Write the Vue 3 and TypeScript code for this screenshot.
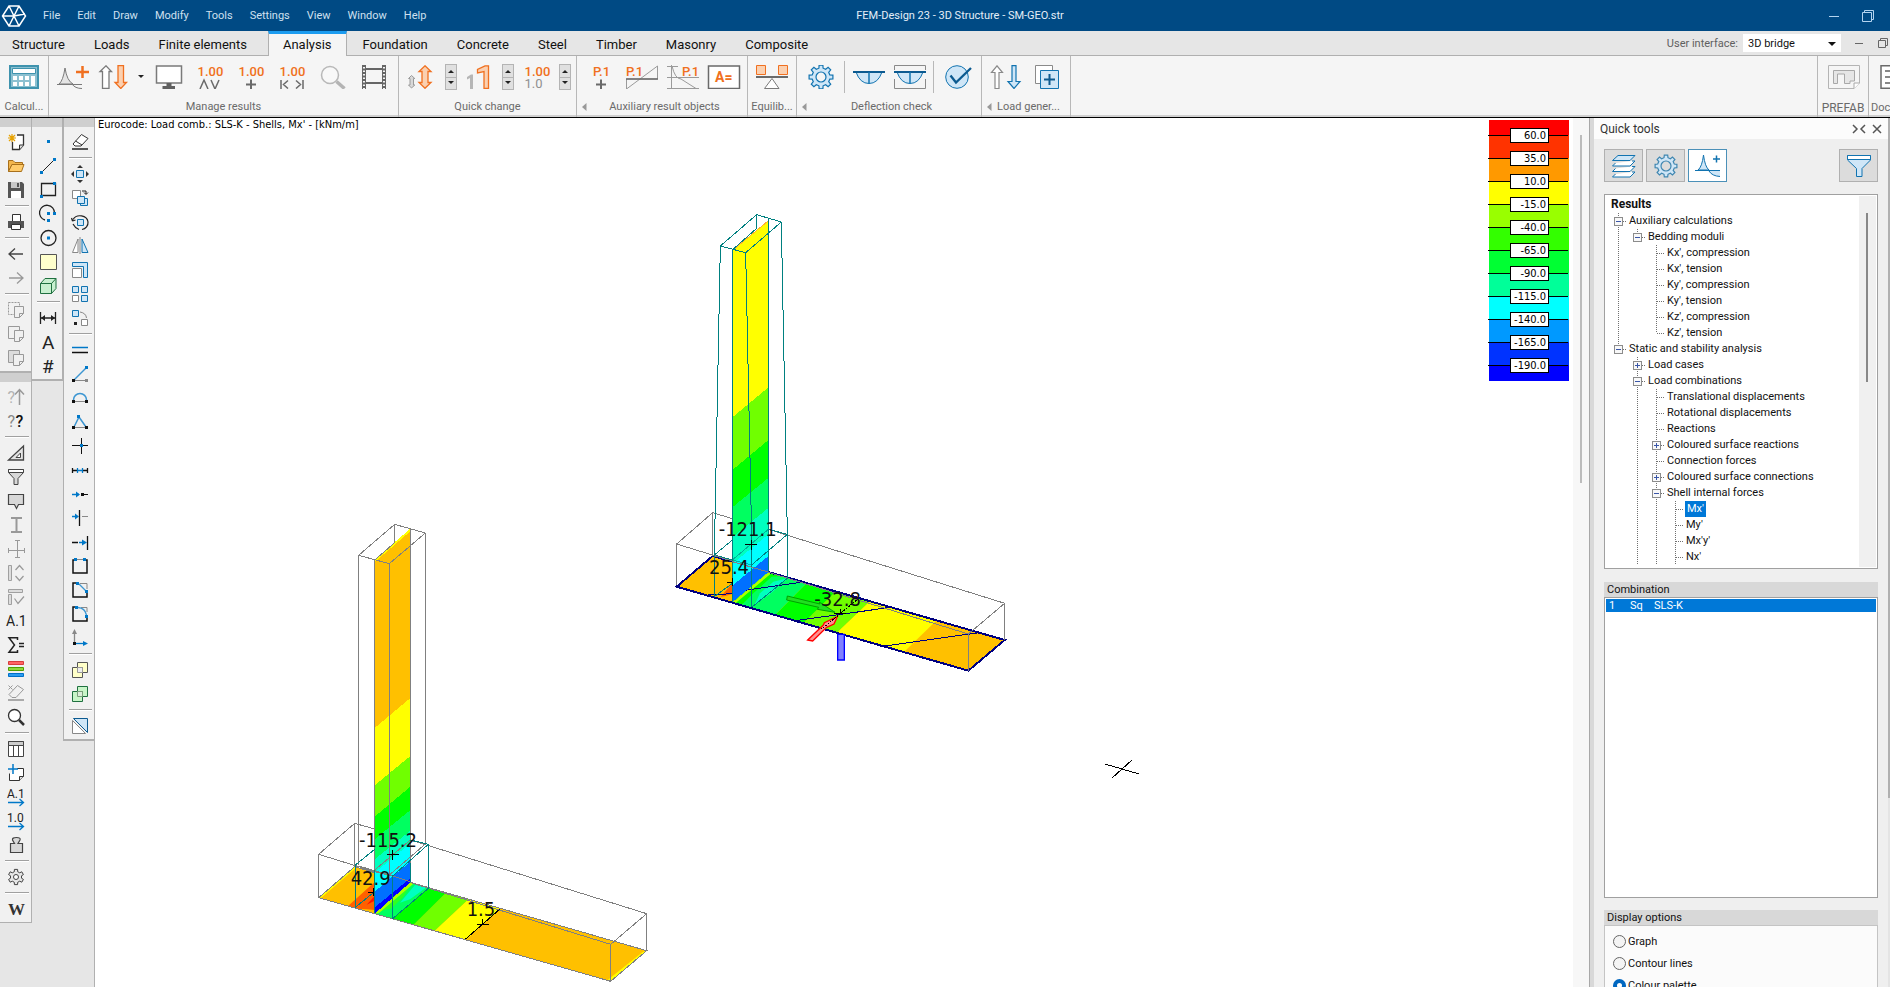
<script setup lang="ts">
import { ref } from 'vue'

const menus = ['File', 'Edit', 'Draw', 'Modify', 'Tools', 'Settings', 'View', 'Window', 'Help']
const tabs = ['Structure', 'Loads', 'Finite elements', 'Analysis', 'Foundation', 'Concrete', 'Steel', 'Timber', 'Masonry', 'Composite']
const activeTab = ref('Analysis')

function gear(cx: number, cy: number, outer: number, inner: number, teeth: number): string {
  const pts: string[] = []
  const step = (Math.PI * 2) / teeth
  for (let i = 0; i < teeth; i++) {
    const a = i * step - Math.PI / 2
    const corners: [number, number][] = [[-0.3, inner], [-0.2, outer], [0.2, outer], [0.3, inner]]
    for (const [k, r] of corners) {
      pts.push((cx + r * Math.cos(a + k * step)).toFixed(1) + ' ' + (cy + r * Math.sin(a + k * step)).toFixed(1))
    }
  }
  return 'M' + pts.join('L') + 'Z'
}

const G = '#7a7a7a'
const O = '#f07020'
const B = '#1173b0'
const LB = '#cfe6f7'

/* Ribbon icons, 36 x 24 */
const big: Record<string, string> = {
  calc: `<path fill="#8cc0d0" stroke="#3f93ae" stroke-width="2" d="M4 1h28v22H4z"/><path fill="#fff" stroke="#3f93ae" d="M6.500 3.500h23v5h-23z"/><path fill="#fff" d="M7 11h4v4H7zM13 11h4v4h-4zM19 11h4v4h-4zM7 17h4v4H7zM13 17h4v4h-4zM19 17h4v4h-4zM25 11h4v10h-4z"/>`,
  diagram: `<path fill="#e4e4e4" stroke="${G}" d="M4 19Q8 16 10 3Q12 16 18 19Z"/><path fill="none" stroke="${G}" d="M2 19.500H27M17 19Q20 23.500 27 23.500"/><path stroke="${O}" stroke-width="2.500" d="M21 7h13M27.500 1v12"/>`,
  arrows: `<path fill="#fff" stroke="${G}" stroke-width="1.300" d="M6.500 23.500V6.500H4L10 .8L15.500 6.500H13V23.500Z"/><path fill="#fbd0b0" stroke="${O}" stroke-width="1.300" d="M22 .7H27.500V17.500H30.500L24.800 23.500L19 17.500H22Z"/>`,
  monitor: `<path fill="#fff" stroke="${G}" stroke-width="1.500" d="M5.500 1h25v17h-25z"/><path fill="#606060" d="M15.500 18h5v3h3.500v3H11.500v-3h4z"/>`,
  peaks: `<text x="5.500" y="10.500" font-size="13" font-weight="500" fill="${O}">1.00</text><path fill="none" stroke="#6a6a6a" stroke-width="1.500" d="M8 24L12 15L16 24M19 15L23 24L27 15"/>`,
  plus: `<text x="5.500" y="10.500" font-size="13" font-weight="500" fill="${O}">1.00</text><path fill="none" stroke="#6a6a6a" stroke-width="2" d="M13 19.500h10M18 14.500v10"/>`,
  ends: `<text x="5.500" y="10.500" font-size="13" font-weight="500" fill="${O}">1.00</text><path fill="none" stroke="#6a6a6a" stroke-width="1.500" d="M7 15v9M14 15.500L9.500 19.500L14 23.500M29 15v9M22 15.500L26.500 19.500L22 23.500"/>`,
  lens: `<circle cx="15" cy="10" r="8.500" fill="#f8f8f8" stroke="#b8b8b8" stroke-width="1.500"/><path stroke="#b4b4b4" stroke-width="3.500" d="M21.500 16.500L29.500 23.500"/>`,
  film: `<path stroke="#666" stroke-width="3" stroke-dasharray="2 1.500" d="M8 0v24M28 0v24"/><path stroke="#666" d="M6.500 0v24M9.500 0v24M26.500 0v24M29.500 0v24"/><path fill="none" stroke="#666" stroke-width="2" d="M9 4h18M9 18h18"/>`,
  scale: `<path fill="#d8d8d8" stroke="#9a9a9a" d="M6.500 23L3.500 20H5V13.500H3.500L6.500 10.500L9.800 13.500H8.500V20H9.800Z"/><path fill="#fbd0b0" stroke="${O}" stroke-width="1.300" d="M20 .8L26 6.500H23V17.500H26L20 23.300L14 17.500H17V6.500H14Z"/>`,
  ones: `<path fill="#b6b6b6" d="M8 24V13L5 14.500V12L9 9.500H11V24Z"/><path fill="#fbd0b0" stroke="${O}" stroke-width="1.300" d="M22 23.500V6.500L15.500 8V4.500L23 .8H26.500V23.500Z"/>`,
  decimals: `<text x="5.500" y="10.500" font-size="13" font-weight="500" fill="${O}">1.00</text><text x="5.500" y="23" font-size="13" fill="#909090">1.0</text>`,
  point: `<text x="10" y="10.500" font-size="13" font-weight="500" fill="${O}">P.1</text><path stroke="#6a6a6a" stroke-width="2" d="M13 19.500h10M18 14.500v10"/>`,
  line: `<path fill="none" stroke="#9a9a9a" d="M2.500 24V14H33.500V1L2.500 24"/><path stroke="#6a6a6a" stroke-width="1.500" d="M2 14h32"/><text x="2" y="10.500" font-size="13" font-weight="500" fill="${O}">P.1</text>`,
  curve: `<path fill="none" stroke="#9a9a9a" d="M2 1.500h11M2 12.500h32M2 23.500h32M6.500 0v24M7 1Q10 14 16 14L31 23.500"/><text x="17" y="10.500" font-size="13" font-weight="500" fill="${O}">P.1</text>`,
  label: `<path fill="#fff" stroke="#6a6a6a" stroke-width="1.500" d="M2.500 1h31v22.500h-31z"/><text x="9" y="17" font-size="14" font-weight="700" fill="${O}">A=</text>`,
  balance: `<path fill="#fbd0b0" stroke="${O}" d="M2.500 .5h9v9h-9zM24.500 .5h9v9h-9z"/><path stroke="#6a6a6a" stroke-width="2" d="M2 12h32"/><path fill="#fff" stroke="${G}" d="M18 13.500L25 23.500H10.500Z"/>`,
  cog: `<path fill="${LB}" stroke="${B}" stroke-width="1.200" d="${gear(18, 12, 12, 9, 8)}"/><circle cx="18" cy="12" r="5" fill="#f5f5f5" stroke="${B}" stroke-width="1.200"/>`,
  sag: `<path fill="${LB}" stroke="${B}" d="M5 7Q9 18.500 18 18.500Q27 18.500 31 7Z"/><path stroke="#0c5a90" stroke-width="2" d="M2 7h32"/><path stroke="${B}" stroke-width="1.500" d="M18 7v11"/>`,
  sagBox: `<path fill="none" stroke="#8a8a8a" d="M2.500 5V.5H33.500V5M2.500 14V23.500H33.500V14"/><path fill="${LB}" stroke="${B}" d="M5 7Q9 18.500 18 18.500Q27 18.500 31 7Z"/><path stroke="#0c5a90" stroke-width="2" d="M2 7h32"/><path stroke="${B}" stroke-width="1.500" d="M18 7v11"/>`,
  check: `<circle cx="17" cy="12" r="11.300" fill="${LB}" stroke="${B}"/><path fill="none" stroke="#0c5a90" stroke-width="2.300" d="M10.500 10.500L16 17.500L31 3"/>`,
  updown: `<path fill="#fff" stroke="#8a8a8a" stroke-width="1.200" d="M7 23.500V7.500H3.500L9 .8L14.500 7.500H11V23.500Z"/><path fill="${LB}" stroke="${B}" stroke-width="1.200" d="M24 .7H28V16.500H32L26 23.500L20 16.500H24Z"/>`,
  add: `<path fill="#fff" stroke="#8a8a8a" d="M6.500 .5h17v18h-17z"/><path fill="${LB}" stroke="${B}" d="M11.500 5.500h18v18h-18z"/><path stroke="#0c5a90" stroke-width="2" d="M15 14.500h11M20.500 9v11"/>`,
  prefab: `<path fill="#f5f5f5" stroke="#b4b4b4" d="M2.500 .5h31V18L28 23.500H2.500z"/><path fill="#e6e6e6" stroke="#a8a8a8" d="M7.500 18.500V5.500H28.500V16H24V18.500H18.500V9H11.500V18.500Z"/><path fill="#fff" stroke="#a8a8a8" d="M33.500 18H28V23.500"/>`,
  doc: `<path fill="#fff" stroke="#6a6a6a" stroke-width="1.500" d="M9 .8h24v22.500H9z"/><path stroke="#888" stroke-width="2" d="M13 6h18M13 12h18M13 18h18"/>`,
  layers: `<path fill="${LB}" stroke="${B}" d="M12 1.500H29L24 6.500H6.500Z"/><path fill="#fff" stroke="${B}" d="M9.500 9L6.500 12H24L29 7H26M9.500 14.500L6.500 17.500H24L29 12.500H26M9.500 20L6.500 23H24L29 18H26"/>`,
  cogSmall: `<path fill="${LB}" stroke="#3f86b0" stroke-width="1.200" d="${gear(18, 12, 11, 8.5, 8)}"/><circle cx="18" cy="12" r="5" fill="#dcdcdc" stroke="#3f86b0" stroke-width="1.200"/>`,
  diagramBlue: `<path fill="${LB}" stroke="${B}" d="M8 16Q12 13 13.500 1Q15 13 19 16Z"/><path fill="${LB}" d="M19 17Q22 22 30 22.500V17"/><path fill="none" stroke="${B}" d="M5 16.500H30M19 17Q22 22 30 22.500"/><path stroke="${B}" stroke-width="1.500" d="M23 5h7M26.500 1.500v7"/>`,
  funnel: `<path fill="${LB}" stroke="${B}" d="M6.500 1.500H29.500V6L21 14.500V22.500H15.500V14.500L6.500 6Z"/><path fill="#fff" stroke="${B}" d="M6.500 1.500H29.500V5.500H6.500Z"/>`
}

interface Tool { icon: string; title: string; spin?: boolean; drop?: boolean; sep?: boolean }
interface Group { label: string; cls: string; more?: boolean; tools: Tool[] }
const groups: Group[] = [
  { label: 'Calcul...', cls: 'narrow', tools: [{ icon: 'calc', title: 'Calculations' }] },
  {
    label: 'Manage results', cls: 'manage', tools: [
      { icon: 'diagram', title: 'New result' }, { icon: 'arrows', title: 'Reaction display', drop: true },
      { icon: 'monitor', title: 'Screen' }, { icon: 'peaks', title: 'Local extremes' }, { icon: 'plus', title: 'Numeric value' },
      { icon: 'ends', title: 'Maximum values' }, { icon: 'lens', title: 'Find' }, { icon: 'film', title: 'Animation' }]
  },
  {
    label: 'Quick change', cls: 'quick', tools: [
      { icon: 'scale', title: 'Diagram scale', spin: true }, { icon: 'ones', title: 'Text size', spin: true }, { icon: 'decimals', title: 'Decimals', spin: true }]
  },
  {
    label: 'Auxiliary result objects', cls: 'aux', more: true, tools: [
      { icon: 'point', title: 'Result point' }, { icon: 'line', title: 'Section line' }, { icon: 'curve', title: 'Resultants' }, { icon: 'label', title: 'Label' }]
  },
  { label: 'Equilib...', cls: 'narrow', tools: [{ icon: 'balance', title: 'Equilibrium' }] },
  {
    label: 'Deflection check', cls: 'defl', more: true, tools: [
      { icon: 'cog', title: 'Configuration', sep: true }, { icon: 'sag', title: 'Deflection length' },
      { icon: 'sagBox', title: 'Deflection region', sep: true }, { icon: 'check', title: 'Check' }]
  },
  { label: 'Load gener...', cls: 'gener', more: true, tools: [{ icon: 'updown', title: 'Reactions to loads' }, { icon: 'add', title: 'Add loads' }] }
]

/* Side toolbar icons, 24 x 24. An empty name stands for a separator. */
const K = '#333'
const sm: Record<string, string> = {
  new: `<path fill="#fff" stroke="${K}" stroke-width="1.300" d="M13 5H19.500V15L15.500 19.500H8.500V12"/><path fill="#ddd" stroke="${K}" d="M19.500 15H15.500V19.500"/><path stroke="#e8a200" stroke-width="1.200" d="M8 4v8M4 8h8M5 5l6 6M11 5l-6 6"/>`,
  open: `<path fill="#f3b64c" stroke="#a8701c" d="M4.500 17.500V6.500H9L11 8.500H18.500V10.500H8Z"/><path fill="#ffcb6a" stroke="#a8701c" d="M4.500 17.500L8 10.500H20L17.500 17.500Z"/>`,
  save: `<path fill="#555" d="M4 4H18L20 6V20H4z"/><path fill="#c9c9c9" d="M7 4h9v6H7z"/><path fill="#fff" d="M7 13h10v7H7z"/><path fill="#555" d="M13 5h2v4h-2z"/>`,
  print: `<path fill="#fff" stroke="${K}" d="M8.500 4.500h8v7h-8z"/><path fill="#555" d="M4 11h16v7H4z"/><path fill="#fff" stroke="${K}" d="M7.500 14.500h9v5h-9z"/>`,
  back: `<path fill="none" stroke="#444" stroke-width="1.300" d="M19 12H5M11 6.500L5 12L11 17.500"/>`,
  fwd: `<path fill="none" stroke="#999" stroke-width="1.300" d="M5 12H19M13 6.500L19 12L13 17.500"/>`,
  cut: `<path fill="none" stroke="#999" stroke-dasharray="2 1" d="M4.500 4.500h11v12h-11z"/><path fill="#f0f0f0" stroke="#999" d="M10.500 8.500H19.500V15.500L15.500 19.500H10.500Z"/><path fill="none" stroke="#999" d="M19.500 15.500h-4v4"/>`,
  copy: `<path fill="#f0f0f0" stroke="#999" d="M4.500 4.500h11v12h-11z"/><path fill="#f0f0f0" stroke="#999" d="M10.500 8.500H19.500V15.500L15.500 19.500H10.500Z"/><path fill="none" stroke="#999" d="M19.500 15.500h-4v4"/>`,
  paste: `<path fill="#dcdcdc" stroke="#999" d="M4.500 4.500h11v12h-11z"/><path fill="#f0f0f0" stroke="#999" d="M9.500 8.500H19.500V15.500L15.500 19.500H9.500Z"/><path fill="none" stroke="#999" d="M19.500 15.500h-4v4"/>`,
  queryUp: `<text x="3.500" y="18" font-size="16" fill="#b4b4b4">?</text><path fill="none" stroke="#999" stroke-width="1.500" d="M15.500 20V5M11 9.500L15.500 4.500L20 9.500"/>`,
  query: `<text x="3.500" y="18" font-size="16" fill="#888">?</text><text x="11.500" y="18" font-size="16" font-weight="500" fill="#111">?</text>`,
  tri: `<path fill="#e4e4e4" stroke="#444" stroke-width="1.300" d="M4.500 19H19.500V5Z"/><path fill="#fff" stroke="#444" d="M12 16.500H16.500V12Z"/>`,
  filter: `<path fill="#d8d8d8" stroke="#444" d="M4.500 7.500V4.500H19.500V7.500L14 13.500V19.500H10V13.500Z"/><path fill="#fff" stroke="#444" d="M4.500 4.500H19.500V7.500H4.500Z"/>`,
  comment: `<path fill="#d8d8d8" stroke="#444" stroke-width="1.200" d="M4.500 5.500H19.500V15.500H14.500L12.500 19.500L10.500 15.500H4.500Z"/>`,
  beam: `<path fill="none" stroke="#999" stroke-width="2" d="M7 5h11M7 19h11M12.500 5v14"/>`,
  axis: `<path fill="none" stroke="#999" d="M13.500 3v18M4 13.500h17M11 3.500h5M4.500 11v5M20.500 11v5M11 20.500h5"/>`,
  heightBar: `<path fill="#ddd" stroke="#a0a0a0" d="M4.500 4.500h3v15h-3z"/><path fill="none" stroke="#999" stroke-width="1.200" d="M11.500 9L15.500 4.500L19.500 9M11.500 15L15.500 19.500L19.500 15"/>`,
  checkBar: `<path fill="#ddd" stroke="#a0a0a0" d="M4.500 9.500h3v10h-3zM4.500 4.500h14v3h-14z"/><path fill="none" stroke="#999" stroke-width="1.200" d="M10.500 13.500L14 18.500L20 11.500"/>`,
  a1: `<text x="2" y="17" font-size="14" fill="#222">A.1</text>`,
  sigma: `<path fill="none" stroke="#222" stroke-width="1.500" d="M13.500 7V4.800H5L10.500 12L5 19.200H13.500V17"/><path stroke="#222" stroke-width="1.500" d="M15 10.500h5M15 13.500h5"/>`,
  rgb: `<path fill="#ff6464" stroke="#d83c3c" d="M4.500 4.500h15v3h-15z"/><path fill="#90d83c" stroke="#4da000" d="M4.500 10.500h15v3h-15z"/><path fill="#2b9cf0" stroke="#0070c8" d="M4.500 16.500h15v3h-15z"/>`,
  eraseX: `<path fill="none" stroke="#999" d="M4.500 4.500l4 4M8.500 4.500l-4 4M5 13.500L13.500 4.500L19.500 8.500L12 16.500H8Z"/><path stroke="#aaa" stroke-width="2" d="M4 19h16"/>`,
  find: `<circle cx="10.500" cy="10.500" r="6" fill="#fff" stroke="#333" stroke-width="1.300"/><path stroke="#333" stroke-width="2.500" d="M15 15L20 20"/>`,
  table: `<path fill="#fff" stroke="#444" d="M4.500 4.500h15v15h-15z"/><path fill="#ccc" stroke="#444" d="M4.500 4.500h15v4h-15z"/><path stroke="#444" d="M9.500 9v11M14.500 9v11"/>`,
  addPage: `<path fill="#fff" stroke="${K}" d="M13 7.500H19.500V15.500L15.500 19.500H5.500V12.500"/><path fill="#ddd" stroke="${K}" d="M19.500 15.500h-4v4"/><path stroke="#0078c8" stroke-width="1.500" d="M4 8h10M9 3v10"/>`,
  a1Arrow: `<text x="3" y="13" font-size="12" fill="#222">A.1</text><path fill="none" stroke="#0078c8" stroke-width="1.300" d="M4 17.500H19M15.500 14L19.500 17.500L15.500 21"/>`,
  oneArrow: `<text x="3" y="13" font-size="12" fill="#222">1.0</text><path fill="none" stroke="#0078c8" stroke-width="1.300" d="M4 17.500H19M15.500 14L19.500 17.500L15.500 21"/>`,
  weight: `<path fill="#d8d8d8" stroke="#444" stroke-width="1.200" d="M6.500 19.500V10.500H10.500L8.500 7Q8 4.500 12.500 4.500Q17 4.500 16 7L14 10.500H18.500V19.500Z"/>`,
  gear: `<path fill="#e6e6e6" stroke="#444" d="${gear(12, 12, 7.8, 5.6, 6)}"/><circle cx="12" cy="12" r="2.500" fill="#fff" stroke="#444"/>`,
  word: `<text x="4" y="18" font-size="17" font-weight="700" class="serif" fill="#333">W</text>`,
  dot: `<path fill="#0078c8" d="M11 10h3v3h-3z"/>`,
  seg: `<path stroke="#222" d="M6 18L18 6"/><path fill="#0078c8" d="M4 17h3v3H4zM17 4h3v3h-3z"/>`,
  rect: `<path fill="none" stroke="#222" stroke-width="1.300" d="M5.500 5.500h14v12h-14z"/><path fill="#0078c8" d="M4 17h3v3H4zM17 4h3v3h-3z"/>`,
  arc: `<path fill="none" stroke="#222" stroke-width="1.300" d="M9 18A7.500 7.500 0 1 1 18.500 11"/><path fill="#0078c8" d="M11 10h3v3h-3zM17 10h3v3h-3zM11 17h3v3h-3z"/>`,
  circle: `<circle cx="12.500" cy="12" r="7.500" fill="none" stroke="#222" stroke-width="1.300"/><path fill="#0078c8" d="M11 10.500h3v3h-3z"/>`,
  plate: `<path fill="#ffffcc" stroke="#555" d="M4.500 4.500h16v15h-16z"/>`,
  cube: `<path fill="#c8f0d0" stroke="#1f7040" d="M4.500 9.500h11v10h-11zM4.500 9.500L9 4.500H20V14.500L15.500 19.500V9.500ZM15.500 9.500L20 4.500"/>`,
  dim: `<path stroke="#222" stroke-width="1.300" d="M4.500 6v12M19.500 6v12M5 12h14"/><path fill="#222" d="M5 12l4-3v6zM19 12l-4-3v6z"/>`,
  bigA: `<text x="6" y="19" font-size="19" fill="#222">A</text>`,
  hash: `<text x="6" y="19" font-size="19" fill="#222">#</text>`,
  erase: `<path fill="#fff" stroke="${K}" d="M5 14L13.500 4.500L20 8.500L13 16H7Z"/><path fill="none" stroke="${K}" d="M7.500 11L14 15"/><path stroke="#555" stroke-width="2" d="M4 19h16"/>`,
  move: `<path fill="${LB}" stroke="${B}" d="M8.500 8.500h7v7h-7z"/><path fill="#333" d="M12 3l3 3H9zM12 21l3-3H9zM3 12l3-3v6zM21 12l-3-3v6z"/>`,
  copies: `<path fill="#fff" stroke="#888" d="M4.500 4.500h8v8h-8z"/><path fill="${LB}" stroke="${B}" d="M12.500 12.500h7v7h-7z"/><path fill="${LB}" stroke="${B}" d="M9.500 10.500h7v7h-7z"/><path fill="none" stroke="#222" d="M14 5h4v3M16 6.500l2 2l2-2"/>`,
  rotate: `<path fill="${LB}" stroke="${B}" d="M9.500 9.500h6v6h-6z"/><path fill="none" stroke="#222" stroke-width="1.200" d="M5 9.500A8 7 0 0 1 20 12A7.500 7 0 0 1 14 19.500M4.500 11l-1 -3M4.500 11l3 -1M5 14Q7 18 11 19.500"/>`,
  mirror: `<path fill="#fff" stroke="#888" d="M4.500 18.500H10V5Z"/><path fill="${LB}" stroke="${B}" d="M14 18.500H20L14 5Z"/><path stroke="#888" d="M12 3v17"/>`,
  resize: `<path fill="${LB}" stroke="${B}" d="M4.500 4.500h15v15h-4v-11h-11z"/><path fill="#fff" stroke="#888" d="M4.500 10.500h9v9h-9z"/>`,
  array: `<path fill="${LB}" stroke="${B}" d="M4.500 4.500h6v6h-6zM13.500 4.500h6v6h-6zM13.500 13.500h6v6h-6z"/><path fill="#fff" stroke="#888" d="M4.500 13.500h6v6h-6z"/>`,
  along: `<path fill="${LB}" stroke="${B}" d="M4.500 4.500h6v6h-6z"/><path fill="#fff" stroke="#888" d="M13.500 13.500h6v6h-6z"/><path fill="none" stroke="#888" d="M12 6Q18 7 18.500 12"/><path fill="#222" d="M6 16h3v3H6z"/>`,
  parallel: `<path stroke="#0078c8" stroke-width="1.500" d="M4 9.500h16"/><path stroke="#111" stroke-width="1.500" d="M4 14.500h16"/>`,
  edit1: `<path stroke="#3c96d2" stroke-width="1.500" d="M6 18L18 6"/><path stroke="#888" d="M7 18.500h10"/><path fill="#111" d="M4 17h3v3H4z"/><path fill="#0078c8" d="M17 4h3v3h-3z"/><path fill="#888" d="M17 17h3v3h-3z"/>`,
  edit2: `<path fill="none" stroke="#3c96d2" stroke-width="1.500" d="M5.500 14A6.500 6.500 0 0 1 18.500 14"/><path stroke="#888" d="M7 15.500h10"/><path fill="#111" d="M4 14h3v3H4zM17 14h3v3h-3z"/>`,
  edit3: `<path fill="none" stroke="#3c96d2" stroke-width="1.500" d="M6 17L11 7L18 17"/><path stroke="#888" d="M7 17.500h10"/><path fill="#111" d="M4 16h3v3H4zM17 16h3v3h-3z"/><path fill="#0078c8" d="M9 5h3v3H9z"/>`,
  cross: `<path stroke="#111" d="M4 11.500h16M13.500 4v16"/><path fill="#0078c8" d="M12 10h3v3h-3z"/>`,
  divide: `<path stroke="#111" stroke-width="1.300" d="M4 12.500h5M14 12.500h6M4.500 10v5M19.500 10v5"/><path stroke="#0078c8" stroke-width="1.300" d="M9 12.500h6M9.500 10v5M14.500 10v5"/>`,
  join: `<path stroke="#0078c8" stroke-width="1.500" d="M4 12.500h7"/><path fill="#0078c8" d="M8 9.500l4 3l-4 3z"/><path fill="#111" d="M13 11h3v3h-3z"/><path stroke="#111" d="M16 12.500h4"/>`,
  trim: `<path stroke="#0078c8" stroke-width="1.500" d="M4 10.500h5"/><path fill="#0078c8" d="M7 7.500l4 3l-4 3z"/><path stroke="#111" stroke-width="1.300" d="M11.500 4v16"/><path stroke="#888" d="M14 10.500h6"/>`,
  extend: `<path stroke="#111" stroke-width="1.300" d="M4 12.500h6M19.500 6v14"/><path stroke="#0078c8" stroke-width="1.500" d="M11 12.500h5"/><path fill="#0078c8" d="M14 9.500l5 3l-5 3z"/>`,
  gap: `<path fill="none" stroke="#111" stroke-width="1.500" d="M7 6H5V19H19V6H17"/><path stroke="#888" d="M9 5.500h6"/><path fill="#0078c8" d="M6 4h3v3H6zM15 4h3v3h-3z"/>`,
  chamfer: `<path fill="none" stroke="#111" stroke-width="1.500" d="M8 5H5V19H19V15"/><path fill="none" stroke="#888" d="M12 5.500h7V11"/><path stroke="#3c96d2" stroke-width="1.300" d="M10 5L18 13"/><path fill="#0078c8" d="M8 4h3v3H8zM17 12h3v3h-3z"/>`,
  fillet: `<path fill="none" stroke="#111" stroke-width="1.500" d="M8 5H5V19H19V15"/><path fill="none" stroke="#888" d="M13 5.500h6V10"/><path fill="none" stroke="#3c96d2" stroke-width="1.300" d="M10 5.500Q17 6 18.500 13"/><path fill="#0078c8" d="M7 4h3v3H7zM17 13h3v3h-3z"/>`,
  ucs: `<path stroke="#888" stroke-width="1.300" d="M6.500 17V6"/><path fill="#888" d="M6.500 3l2.500 5H4z"/><path stroke="#0078c8" stroke-width="1.300" d="M8 17.500h9"/><path fill="#0078c8" d="M20 17.500l-5-2.500v5z"/><path fill="#111" d="M5 16h3v3H5z"/>`,
  union: `<path fill="#ffffc8" stroke="#555" d="M9.500 4.500h10v10h-10z"/><path fill="#ffffc8" stroke="#555" d="M4.500 9.500h10v10h-10z"/><path fill="#eee" stroke="#999" d="M9.500 9.500h5v5h-5z"/>`,
  unionG: `<path fill="#c8f5c8" stroke="#1f7040" d="M9.500 4.500h10v10h-10z"/><path fill="#c8f5c8" stroke="#1f7040" d="M4.500 9.500h10v10h-10z"/><path fill="#ddeedd" stroke="#7aa07a" d="M9.500 9.500h5v5h-5z"/>`,
  split: `<path fill="${LB}" stroke="#0c5a90" d="M5.500 4.500H19.500V18.500Z"/><path fill="#fff" stroke="#888" d="M4.500 6.500V19.500H17.500Z"/>`
}
const barA = ['new', 'open', 'save', '', 'print', '', 'back', 'fwd', '', 'cut', 'copy', 'paste']
const barB = ['queryUp', 'query', '', 'tri', 'filter', 'comment', 'beam', 'axis', 'heightBar', 'checkBar', 'a1', 'sigma', 'rgb', 'eraseX', 'find', '', 'table', 'addPage', 'a1Arrow', 'oneArrow', 'weight', '', 'gear', '', 'word']
const barC = ['dot', 'seg', 'rect', 'arc', 'circle', 'plate', 'cube', '', 'dim', 'bigA', 'hash']
const barD = ['erase', '', 'move', 'copies', 'rotate', 'mirror', 'resize', 'array', 'along', '', 'parallel', 'edit1', 'edit2', 'edit3', 'cross', 'divide', 'join', 'trim', 'extend', 'gap', 'chamfer', 'fillet', 'ucs', '', 'union', 'unionG', '', 'split']
const sideColumns = [[barA, barB], [barC], [barD]]

/* Guide codes: | line, T tee, L corner, m/p open/closed with siblings below, n open and last */
const tree: { g: string; t: string; sel?: boolean }[] = [
  { g: 'm', t: 'Auxiliary calculations' },
  { g: '|n', t: 'Bedding moduli' },
  { g: '| T', t: "Kx', compression" },
  { g: '| T', t: "Kx', tension" },
  { g: '| T', t: "Ky', compression" },
  { g: '| T', t: "Ky', tension" },
  { g: '| T', t: "Kz', compression" },
  { g: '| L', t: "Kz', tension" },
  { g: 'n', t: 'Static and stability analysis' },
  { g: ' p', t: 'Load cases' },
  { g: ' m', t: 'Load combinations' },
  { g: ' |T', t: 'Translational displacements' },
  { g: ' |T', t: 'Rotational displacements' },
  { g: ' |T', t: 'Reactions' },
  { g: ' |p', t: 'Coloured surface reactions' },
  { g: ' |T', t: 'Connection forces' },
  { g: ' |p', t: 'Coloured surface connections' },
  { g: ' |m', t: 'Shell internal forces' },
  { g: ' ||T', t: "Mx'", sel: true },
  { g: ' ||T', t: "My'" },
  { g: ' ||T', t: "Mx'y'" },
  { g: ' ||T', t: "Nx'" }
]

const bands = ['#ff0000', '#ff3300', '#ff9900', '#ffff00', '#99ff00', '#33ff00', '#00ff33', '#00ff99', '#00ffff', '#0099ff', '#0033ff', '#0000ff']
const levels = ['60.0', '35.0', '10.0', '-15.0', '-40.0', '-65.0', '-90.0', '-115.0', '-140.0', '-165.0', '-190.0']

/* Colour bands of a wall strip: fill, lower edge at the left side, lower edge at the right side */
type Band = [string, number, number]
function strip(x1: number, x2: number, top: [number, number], list: Band[]) {
  let [l, r] = top
  return list.map(([fill, nl, nr]) => {
    const points = `${x1},${l} ${x2},${r} ${x2},${nr} ${x1},${nl}`
    l = nl
    r = nr
    return { fill, points }
  })
}
const wallA = strip(217, 325, [150, 60], [['#ffff00', 652, 562], ['#70ff00', 810, 720], ['#00ff00', 922, 834], ['#00ff60', 1012, 924], ['#00ffc0', 1092, 1003], ['#00ffff', 1157, 1068], ['#0070ff', 1207, 1116]])
const wallB = strip(224, 331, [150, 58], [['#ffc000', 654, 564], ['#ffff00', 826, 738], ['#70ff00', 920, 830], ['#00ff00', 988, 900], ['#00ff60', 1048, 962], ['#00ffc0', 1088, 1000], ['#00ffff', 1145, 1055], ['#0070ff', 1192, 1105], ['#0000ff', 1211, 1117]])

const display = ref('Colour palette')
const displayOptions = ['Graph', 'Contour lines', 'Colour palette']
</script>

<template>
  <div class="app">
    <header class="title-bar">
      <svg class="logo" width="26" height="24" viewBox="0 0 26 24"><path fill="none" stroke="#fff" stroke-width="1.500" d="M8 2H18L24.500 12L18 22H8L1.500 12ZM8 2L18 22M18 2L8 22M1.500 12L13 12L24 10" /></svg>
      <nav class="menus"><button v-for="m in menus" :key="m" type="button">{{ m }}</button></nav>
      <h1>FEM-Design 23 - 3D Structure - SM-GEO.str</h1>
      <div class="win">
        <button type="button" aria-label="Minimize"><svg width="12" height="12"><path stroke="#b4d4f0" d="M1 6.500h10" /></svg></button>
        <button type="button" aria-label="Restore"><svg width="12" height="12"><path fill="none" stroke="#b4d4f0" d="M.5 2.500h9v9h-9zM2.500 2V.500h9v9H10" /></svg></button>
      </div>
    </header>

    <div class="tab-row">
      <button v-for="t in tabs" :key="t" type="button" class="tab" :class="{ on: t === activeTab }" @click="activeTab = t">{{ t }}</button>
      <span class="grow"></span>
      <label for="ui">User interface:</label>
      <div class="select-box">
        <select id="ui"><option>3D bridge</option></select>
        <svg width="8" height="5"><path fill="#111" d="M0 0h8l-4 4z" /></svg>
      </div>
      <button type="button" class="mini" aria-label="Minimize view"><svg width="10" height="10"><path stroke="#666" d="M1 5.500h8" /></svg></button>
      <button type="button" class="mini last" aria-label="Restore view"><svg width="10" height="10"><path fill="none" stroke="#666" d="M.5 2.500h7v7h-7zM2.500 2V.500h7v7H8" /></svg></button>
    </div>

    <div class="ribbon">
      <section v-for="g in groups" :key="g.label" class="group" :class="g.cls">
        <div class="tools">
          <template v-for="t in g.tools" :key="t.icon">
            <button type="button" class="tool" :title="t.title"><svg width="36" height="24" v-html="big[t.icon]"></svg></button>
            <button v-if="t.drop" type="button" class="drop" aria-label="More"><svg width="6" height="4"><path fill="#222" d="M0 0h6l-3 3z" /></svg></button>
            <div v-if="t.spin" class="spin">
              <button type="button" aria-label="Increase"><svg width="6" height="4"><path fill="#222" d="M0 4h6l-3-3z" /></svg></button>
              <button type="button" aria-label="Decrease"><svg width="6" height="4"><path fill="#222" d="M0 0h6l-3 3z" /></svg></button>
            </div>
            <i v-if="t.sep" class="vsep"></i>
          </template>
        </div>
        <div class="caption"><svg v-if="g.more" width="5" height="8"><path fill="#999" d="M4.500 0v8L0 4z" /></svg><span>{{ g.label }}</span></div>
      </section>
      <span class="grow"></span>
      <section class="group prefab">
        <div class="tools"><button type="button" class="tool" title="Prefab"><svg width="36" height="24" v-html="big.prefab"></svg></button></div>
        <div class="caption"><span>PREFAB</span></div>
      </section>
      <section class="group docs">
        <div class="tools"><button type="button" class="tool" title="Documentation"><svg width="36" height="24" v-html="big.doc"></svg></button></div>
        <div class="caption"><span>Doc</span></div>
      </section>
    </div>

    <div class="work">
      <aside class="side">
        <div v-for="(col, c) in sideColumns" :key="c" class="col">
          <div v-for="(bar, b) in col" :key="b" class="bar" role="toolbar">
            <div class="grip"></div>
            <template v-for="(n, i) in bar" :key="i">
              <button v-if="n" type="button" :aria-label="n"><svg width="24" height="24" v-html="sm[n]"></svg></button>
              <hr v-else />
            </template>
          </div>
        </div>
      </aside>

      <main class="canvas">
        <p class="status">Eurocode: Load comb.: SLS-K - Shells, Mx' - [kNm/m]</p>
        <svg class="scene" width="100%" height="100%">
          <g transform="translate(-95 -118)">
            <svg x="660" y="200" width="360" height="480" viewBox="0 0 1080 1440">
              <g class="ln gray">
                <path d="M50 1032L158 938L217 956M158 938V1068M50 1032V1160" />
              </g>
              <path fill="#ffc000" d="M50 1160L158 1068L325 1116L1034 1320L925 1412Z" />
              <path fill="#ffff00" d="M530 1298L630 1203L830 1261L732 1356Z" />
              <path fill="#70ff00" d="M430 1269L528 1174L630 1203L530 1298Z" />
              <path fill="#00ff00" d="M345 1245L440 1149L528 1174L430 1269Z" />
              <path fill="#00ff60" d="M217 1208L325 1116L440 1149L345 1245Z" />
              <path fill="#00ff00" d="M217 1208L325 1116L368 1128L335 1130L280 1180L245 1215Z" />
              <path fill="#b0ff00" d="M217 1208L325 1116L335 1119L228 1208Z" />
              <path fill="#00ffc0" d="M283 1216L300 1180L340 1145L385 1134L330 1182Z" />
              <path fill="#ff6000" d="M182 1190L217 1150V1182L195 1188Z" />
              <g class="ln navy"><path d="M145 1185L215 1181L262 1170L430 1146M405 1262L600 1235L690 1222M660 1340L870 1310L960 1298" /></g>
              <g class="ln navy thick"><path d="M325 1116L1034 1320L925 1412L50 1160L158 1068L217 1085" /></g>
              <g class="ln teal"><path d="M163 1065L217 1020M163 1065L217 1080" /></g>
              <g class="ln gray"><path d="M325 988L1034 1210V1320M50 1032L925 1302L1034 1210M925 1302V1412" /></g>
              <polygon v-for="(p, i) in wallA" :key="i" class="crisp" :fill="p.fill" :points="p.points" />
              <path class="ln" stroke="#ffb030" stroke-width="1" d="M217 152L325 62" />
              <g class="ln teal">
                <path d="M181 138L290 44L364 66L257 158ZM290 44V85L217 150V1207M325 56V1116M181 138L163 1062V1190M364 66L382 1000V1135L275 1222M257 158L274 960L275 1222M325 988L382 1003L275 1095M163 1190L217 1150" />
                <path class="faint" d="M217 1080L325 988M217 1080L275 1095" />
              </g>
              <path class="ln gray" d="M217 1085L325 1116" />
              <path fill="#20e020" stroke="#00a000" stroke-width="3" d="M382 1188L480 1212L478 1206L525 1237L472 1228L476 1222L380 1200Z" />
              <path fill="#ff9090" stroke="#ff0000" stroke-width="4" d="M443 1320L490 1275L493 1268L532 1250L522 1272L500 1282L458 1323Z" />
              <path fill="#8080ff" stroke="#0000ff" stroke-width="4" d="M533 1303H553V1380H533Z" />
              <g class="ln black">
                <path stroke-dasharray="2 1" d="M590 1200L485 1287" />
                <path d="M255 1034H291M273 1019V1050M202 1147H217M217 1135V1158M523 1241H559M541 1226V1241" />
              </g>
              <text x="176" y="1008">-121.1</text>
              <text x="147" y="1123">25.4</text>
              <text x="463" y="1218">-32.8</text>
            </svg>

            <svg x="300" y="510" width="360" height="477" viewBox="0 0 1080 1431">
              <g class="ln gray">
                <path d="M56 1033L164 940L224 957M164 940V1070M56 1033V1163M176 136V1065" />
              </g>
              <path fill="#ffc000" d="M56 1163L164 1070L331 1117L1040 1322L932 1414Z" />
              <path fill="#ffff00" d="M56 1163L164 1070L170 1072L64 1163ZM1028 1326L1040 1322L932 1414L920 1412Z" />
              <path fill="#ffff00" d="M403 1263L505 1168L600 1195L497 1290Z" />
              <path fill="#70ff00" d="M340 1245L438 1148L505 1168L403 1263Z" />
              <path fill="#00ff00" d="M278 1227L385 1133L438 1148L340 1245Z" />
              <path fill="#00ff60" d="M224 1211L331 1117L385 1133L278 1227Z" />
              <path fill="#00ffc0" d="M300 1178L345 1125L380 1132L330 1168Z" />
              <path fill="#30ff20" d="M235 1205L285 1170L325 1135L310 1160L275 1195Z" />
              <path fill="#b0ff00" d="M224 1211L331 1117L342 1120L236 1210Z" />
              <path fill="#ff6000" d="M145 1187L224 1116V1200L200 1198L170 1196Z" />
              <path fill="#ff1000" d="M200 1184L224 1158V1172Z" />
              <g class="ln gray"><path d="M331 1117L1040 1322L932 1414L56 1163L164 1070L224 1088M331 990L1040 1211V1322M56 1033L932 1303L1040 1211M932 1303V1414" /></g>
              <polygon v-for="(p, i) in wallB" :key="i" class="crisp" :fill="p.fill" :points="p.points" />
              <path class="ln" stroke="#ffff00" stroke-width="2" d="M224 152L331 60" />
              <g class="ln gray">
                <path d="M176 136L284 43L376 69L268 161ZM284 43V98L224 150V1080M331 56V1060M376 69V1002M268 161V1095M331 990L376 1002L268 1095L176 1068M224 1080L331 990M224 1085L278 1098L331 1115" />
              </g>
              <g class="ln teal"><path d="M224 1080V1210M331 1060V1117M166 1065L224 1018M166 1065V1192L224 1145M278 1098V1226L385 1135V1003L278 1098M331 990L385 1003" /></g>
              <g class="ln black">
                <path d="M600 1197L497 1287" />
                <path d="M260 1034H296M278 1019V1050M204 1147H222M219 1135V1158M530 1242H566M548 1226V1246" />
              </g>
              <text x="177" y="1011">-115.2</text>
              <text x="152" y="1125">42.9</text>
              <text x="500" y="1218">1.5</text>
            </svg>
            <path class="ln black" d="M1105 764L1139 774M1132 760L1112 778" />
          </g>
        </svg>

        <svg class="legend" width="81" height="261">
          <rect v-for="(c, i) in bands" :key="c" x="1" width="80" :y="i ? 23 * i - 8 : 0" :height="i ? 23 : 15" :fill="c" />
          <g v-for="(l, i) in levels" :key="l">
            <path stroke="#000" :d="`M0 ${23 * i + 15.5}h80`" />
            <rect x="22.500" :y="23 * i + 8.5" width="38" height="14" fill="#fff" stroke="#000" />
            <text x="58" :y="23 * i + 19" text-anchor="end">{{ l }}</text>
          </g>
        </svg>
      </main>

      <div class="vscroll"><i></i></div>

      <aside class="quick-tools">
        <header><h2>Quick tools</h2>
          <button type="button" aria-label="Collapse"><svg width="14" height="10"><path fill="none" stroke="#555" stroke-width="1.500" d="M1 1L5 5L1 9M13 1L9 5L13 9" /></svg></button>
          <button type="button" aria-label="Close"><svg width="10" height="10"><path stroke="#555" stroke-width="1.500" d="M1 1L9 9M9 1L1 9" /></svg></button>
        </header>
        <div class="body">
          <div class="modes">
            <button type="button" title="Layers"><svg width="36" height="24" v-html="big.layers"></svg></button>
            <button type="button" title="Settings"><svg width="36" height="24" v-html="big.cogSmall"></svg></button>
            <button type="button" title="Results" class="on"><svg width="36" height="24" v-html="big.diagramBlue"></svg></button>
            <span class="grow"></span>
            <button type="button" title="Filter"><svg width="36" height="24" v-html="big.funnel"></svg></button>
          </div>

          <div class="tree-box">
            <ul role="tree" aria-label="Results">
              <li class="root" role="treeitem">Results</li>
              <li v-for="(r, i) in tree" :key="i" role="treeitem" :aria-selected="!!r.sel">
                <svg height="16" :width="r.g.length * 19">
                  <g v-for="(c, k) in r.g.split('')" :key="k" :transform="`translate(${k * 19} 0)`">
                    <path v-if="'|Tmp'.includes(c)" class="dots" d="M9.500 0V16" />
                    <path v-if="'Ln'.includes(c)" class="dots" d="M9.500 0V8" />
                    <path v-if="'TLmnp'.includes(c)" class="dots" d="M10 8.500H18" />
                    <template v-if="'mnp'.includes(c)">
                      <rect x="5.500" y="4.500" width="8" height="8" fill="#f8f8f8" stroke="#8c8c8c" />
                      <path stroke="#3a56a8" d="M7 8.500h5" />
                      <path v-if="c === 'p'" stroke="#3a56a8" d="M9.500 6v5" />
                    </template>
                  </g>
                </svg>
                <span :class="{ sel: r.sel }">{{ r.t }}</span>
              </li>
            </ul>
            <div class="tree-scroll"><i></i></div>
          </div>

          <h3>Combination</h3>
          <div class="list">
            <table><tbody><tr><td>1</td><td>Sq</td><td>SLS-K</td></tr></tbody></table>
          </div>

          <h3>Display options</h3>
          <fieldset>
            <label v-for="o in displayOptions" :key="o"><input v-model="display" type="radio" name="display" :value="o" />{{ o }}</label>
          </fieldset>
        </div>
      </aside>
      <div class="edge"></div>
    </div>
  </div>
</template>

<style>
html, body { margin: 0; height: 100%; overflow: hidden; }
#app { height: 100%; }
.serif { font-family: "Liberation Serif", serif; }
</style>

<style scoped>
.app { display: flex; flex-direction: column; height: 100vh; overflow: hidden; background: #e6e6e6; font: 11px Roboto, "Liberation Sans", sans-serif; color: #111; }
.app * { box-sizing: border-box; }
button { padding: 0; border: 0; background: none; font: inherit; color: inherit; }
svg { display: block; flex: none; }
.grow { flex: 1; }

.title-bar { position: relative; flex: none; display: flex; align-items: center; height: 31px; background: #004a84; color: #cfe0f0; }
.logo { margin-left: 1px; }
.menus { display: flex; gap: 17px; margin-left: 16px; }
.menus button { line-height: 16px; }
h1 { position: absolute; left: 0; right: 0; margin: 0; text-align: center; font-size: 11px; font-weight: 400; line-height: 16px; pointer-events: none; color: #e4eef8; padding-left: 30px; }
.win { display: flex; gap: 22px; margin-left: auto; padding-right: 16px; }

.tab-row { flex: none; display: flex; gap: 1px; align-items: center; height: 25px; border-bottom: 1px solid #b0b0b0; background: #e6e6e6; }
.tab { flex: none; height: 25px; padding: 0 14px; font-size: 13px; border-top: 3px solid transparent; line-height: 16px; margin-bottom: -1px; }
.tab:first-child { padding-left: 12px; }
.tab.on { margin: 0 1px -1px 6px; background: #f5f5f5; border-top-color: #1c9cf0; border-left: 1px solid #b0b0b0; border-right: 1px solid #b0b0b0; }
.tab-row label { color: #606060; margin-right: 4px; }
.select-box { position: relative; width: 98px; height: 18px; background: #fff; }
.select-box select { appearance: none; width: 100%; height: 18px; padding: 0 5px; border: 0; background: none; font: 11px Roboto, sans-serif; color: #111; }
.select-box svg { position: absolute; right: 5px; top: 8px; }
.mini { margin-left: 12px; }
.mini.last { margin: 0 2px 0 13px; }

.ribbon { flex: none; display: flex; height: 62px; background: #f5f5f5; border-bottom: 1px solid #000; box-shadow: inset 0 -2px #d0d0d0; overflow: hidden; }
.group { flex: none; display: flex; flex-direction: column; border-right: 1px solid #b8b8b8; }
.tools { display: flex; align-items: center; height: 42px; padding: 0 3px; }
.tools > * { flex: none; }
.tool { display: flex; justify-content: center; width: 41px; }
.drop { display: flex; justify-content: center; width: 14px; }
.spin { display: flex; flex-direction: column; width: 12px; height: 26px; margin: 0 2px; border: 1px solid #b4b4b4; background: #e0e0e0; }
.spin button { flex: 1; display: flex; align-items: center; justify-content: center; }
.spin button + button { border-top: 1px solid #b4b4b4; }
.vsep { width: 1px; height: 32px; background: #b8b8b8; margin: 0 3px; }
.caption { display: flex; align-items: center; height: 17px; color: #6a6a6a; padding: 0 5px; }
.caption span { flex: 1; text-align: center; white-space: nowrap; }
.narrow { width: 49px; }
.narrow .caption { padding: 0; }
.manage { width: 350px; }
.quick { width: 178px; }
.quick .tools { padding-right: 0; }
.aux { width: 171px; }
.defl { width: 185px; }
.gener { width: 89px; }
.prefab { width: 52px; border-left: 1px solid #b8b8b8; }
.prefab .tools { padding: 0 5px; }
.prefab .caption { padding: 0; height: 19px; font-size: 12px; }
.docs { width: 21px; border: 0; overflow: hidden; }
.docs .tools { padding: 0; }
.docs .caption { padding: 0 0 0 2px; height: 19px; }
.docs .caption span { text-align: left; }

.work { flex: 1; min-height: 0; display: flex; }
.side { flex: none; display: flex; align-items: flex-start; border-right: 1px solid #b0b0b0; }
.bar { width: 31px; background: #f1f1f1; border-right: 1px solid #b0b0b0; border-bottom: 2px solid #b0b0b0; padding-bottom: 1px; }
.bar + .bar { border-bottom-width: 1px; }
.col:first-child .bar { width: 32px; }
.col:last-child .bar { border-left: 1px solid #b0b0b0; border-right: 0; }
.grip { height: 9px; background: #cfcfcf; margin-bottom: 3px; }
.bar button { display: block; width: 24px; height: 24px; margin-left: 4px; }
.bar hr { height: 2px; margin: 3px 2px 3px 5px; border: 0; border-top: 1px solid #a0a0a0; background: #fff; }

.canvas { position: relative; flex: 1; min-width: 0; background: #fff; overflow: hidden; }
.status { position: absolute; margin: 0; left: 3px; top: 0; font: 11px/14px "DejaVu Sans Condensed", "DejaVu Sans", sans-serif; color: #000; white-space: nowrap; }
.scene text { font: 60px "DejaVu Sans Condensed", "DejaVu Sans", sans-serif; fill: #111; }
.ln { fill: none; shape-rendering: crispEdges; }
.ln path, path.ln { vector-effect: non-scaling-stroke; }
.gray { stroke: #808080; }
.teal { stroke: #008080; }
.faint { opacity: 0.6; }
.navy { stroke: #000080; }
.black { stroke: #000; }
.thick path { stroke-width: 2px; }
.crisp { shape-rendering: crispEdges; }
.legend { position: absolute; right: 4px; top: 2px; }
.legend text { font: 11px "DejaVu Sans Condensed", "DejaVu Sans", sans-serif; fill: #000; }

.vscroll { flex: none; width: 16px; background: #f7f7f7; padding: 17px 0 0 7px; }
.vscroll i { display: block; width: 2px; height: 348px; background: #bcbcbc; }

.quick-tools { flex: none; display: flex; flex-direction: column; width: 299px; border-left: 1px solid #a8a8a8; box-shadow: inset 4px 0 #d8d8d8; padding-left: 4px; background: #efefef; }
.quick-tools > header { display: flex; align-items: center; gap: 6px; height: 21px; padding: 0 6px; background: #fcfcfc; }
h2 { flex: 1; margin: 0; font-size: 12px; font-weight: 400; color: #333; }
.body { flex: 1; min-height: 0; display: flex; flex-direction: column; padding: 10px 10px 0; }
.modes { display: flex; gap: 3px; flex: none; height: 33px; margin-bottom: 12px; }
.modes button { display: flex; align-items: center; justify-content: center; width: 39px; border: 1px solid #b0b0b0; background: #dcdcdc; }
.modes .on { background: #fff; border-color: #4b90b8; }
.tree-box { flex: 375 1 0; min-height: 0; display: flex; border: 1px solid #a0a0a0; background: #fff; padding: 1px; overflow: hidden; }
ul { flex: 1; margin: 0; padding: 0 0 0 3px; list-style: none; }
li { display: flex; height: 16px; line-height: 15px; white-space: nowrap; }
.root { font-weight: 700; font-size: 12px; padding-left: 2px; height: 17px; line-height: 17px; }
li span { padding: 0 1px; }
.sel { background: #0078d7; color: #fff; padding: 0 2px; }
.dots { fill: none; stroke: #707070; stroke-dasharray: 1 1; }
.tree-scroll { width: 17px; background: #f0f0f0; padding: 17px 0 0 7px; }
.tree-scroll i { display: block; width: 2px; height: 169px; background: #888; }
h3 { flex: none; margin: 13px 0 0; height: 15px; line-height: 16px; padding-left: 3px; background: #d8d8d8; font-size: 11px; font-weight: 400; }
.list { flex: 301 1 0; min-height: 0; border: 1px solid #a0a0a0; background: #fff; padding: 1px; }
table { width: 100%; border-collapse: collapse; background: #0078d7; color: #fff; }
td { padding: 0 0 0 3px; height: 13px; line-height: 13px; }
td:nth-child(1) { width: 21px; }
td:nth-child(2) { width: 24px; }
.list + h3 { margin-top: 12px; }
fieldset { flex: 0 0 62px; margin: 0; padding: 4px 8px; border: 1px solid #c4c4c4; border-bottom: 0; background: #fbfbfb; overflow: hidden; }
fieldset label { display: flex; align-items: center; gap: 2px; height: 22px; }
input { appearance: none; width: 13px; height: 13px; margin: 0; border: 1px solid #666; border-radius: 50%; background: #f4f4f4; }
input:checked { border: 4px solid #0067c0; background: #fff; }
.edge { flex: none; width: 2px; background: linear-gradient(#b0b0b0 680px, #e4e4e4 680px); }
</style>
